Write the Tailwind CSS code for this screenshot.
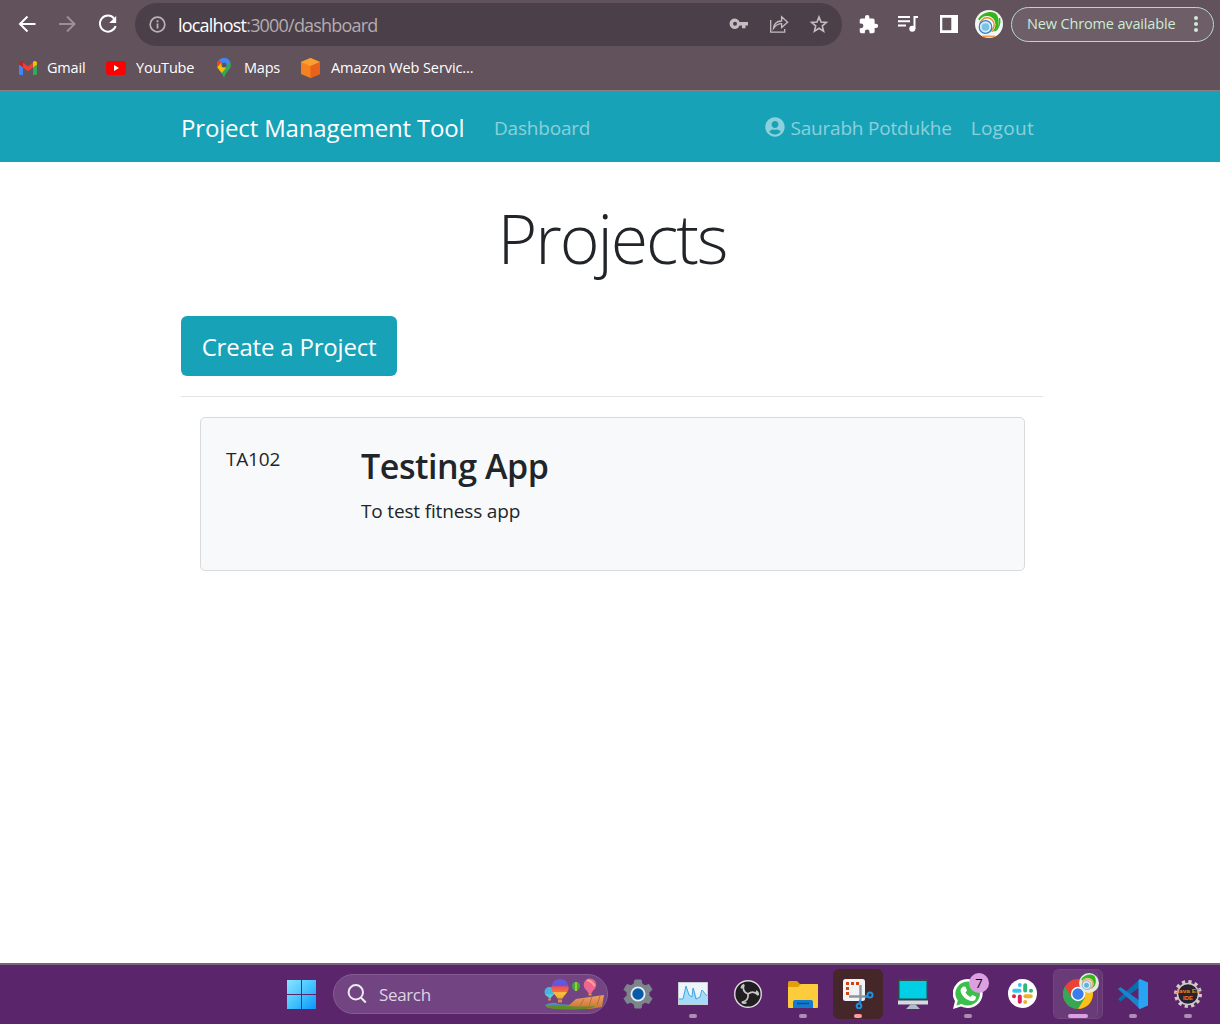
<!DOCTYPE html>
<html lang="en">
<head>
<meta charset="utf-8">
<title>Project Management Tool</title>
<script src="https://cdn.jsdelivr.net/npm/@tailwindcss/browser@4"></script>
</head>
<body class="w-[1220px] h-[1024px] overflow-hidden bg-white flex flex-col font-['Open_Sans','Noto_Sans',sans-serif] text-[#212529]">

<!-- Browser chrome -->
<header class="h-[91px] shrink-0 bg-[#61525c] border-b border-[#8a7d85] flex flex-col text-white">
  <div class="h-[48px] flex items-center">
    <svg class="ml-[17px] w-5 h-5" viewBox="0 0 20 20" fill="none" stroke="#fff" stroke-width="2"><path d="M18.500 10H3.500M10.500 2.500L3 10l7.500 7.500"/></svg>
    <svg class="ml-5 w-5 h-5" viewBox="0 0 20 20" fill="none" stroke="#9b9097" stroke-width="2"><path d="M2 10h15.500M10 2.500l7.500 7.500L10 17.500"/></svg>
    <svg class="ml-5 w-[22px] h-[22px]" viewBox="0 0 22 22" fill="none"><path d="M17.200 5.600A8 8 0 1 0 18.600 13" stroke="#fff" stroke-width="2"/><path d="M19.200 3v7h-7z" fill="#fff"/></svg>
    <div class="ml-4 w-[707px] h-[43px] rounded-full bg-[#4b4049] flex items-center">
      <svg class="ml-[14px] w-[17px] h-[17px]" viewBox="0 0 17 17" fill="none" stroke="#b9b3b7"><circle cx="8.500" cy="8.500" r="7.300" stroke-width="1.700"/><path d="M8.500 7.600v5M8.500 4.300v1.900" stroke-width="1.800"/></svg>
      <div class="ml-[12px] pt-px text-[18px] leading-6 whitespace-nowrap tracking-[-0.800px] text-[#b3acb0]"><span class="text-white">localhost</span>:3000/dashboard</div>
      <div class="ml-auto mr-[13px] flex items-center gap-5 text-[#c3bdc1]">
        <svg class="w-5 h-5" viewBox="0 0 20 20" fill="currentColor"><path fill-rule="evenodd" d="M10.600 8A5.200 5.200 0 1 0 10.600 11.500H13v2.800h3.500v-2.800H19V8zM6 7.800a2 2 0 1 1 0 4 2 2 0 0 1 0-4z"/></svg>
        <svg class="w-5 h-5" viewBox="0 0 20 20" fill="none" stroke="currentColor" stroke-width="1.300"><path d="M1.700 6v12.200h14v-3.300M4.500 14.300C5 9.500 8 7.200 12.600 7V2.800l6 5.400-6 5.400V9.700c-3.500 0-5.800 1.400-8.100 4.600z"/></svg>
        <svg class="w-5 h-5" viewBox="0 0 20 20" fill="none" stroke="currentColor" stroke-width="1.600"><path d="M10 3l2 5 5.400.4-4.100 3.500 1.300 5.300L10 14.300l-4.600 2.900 1.300-5.300-4.100-3.500L8 8z"/></svg>
      </div>
    </div>
    <svg class="ml-[16px] w-[21px] h-[21px]" viewBox="0 0 24 24" fill="#fff"><path d="M20.500 11H19V7c0-1.100-.9-2-2-2h-4V3.500a2.500 2.500 0 0 0-5 0V5H4c-1.100 0-2 .9-2 2v3.800h1.500a2.700 2.700 0 0 1 0 5.400H2V20c0 1.100.9 2 2 2h3.800v-1.500a2.700 2.700 0 0 1 5.400 0V22H17c1.100 0 2-.9 2-2v-4h1.500a2.500 2.500 0 0 0 0-5z"/></svg>
    <svg class="ml-[19px] w-[21px] h-[18px]" viewBox="0 0 21 18" fill="none" stroke="#fff" stroke-width="2"><path d="M0 2h12M0 6.200h12M0 10.400h8M16.500 14V2h3.500"/><circle cx="14.300" cy="13.700" r="2.300" fill="#fff" stroke-width="1.500"/></svg>
    <svg class="ml-[21px] w-[18px] h-[18px]" viewBox="0 0 18 18"><path fill="#fff" fill-rule="evenodd" d="M0 0h18v18H0zM2.300 2.800v12.400h9V2.800z"/></svg>
    <svg class="ml-[17px] w-7 h-7" viewBox="0 0 28 28"><circle cx="14" cy="14" r="14" fill="#f4f5f4"/><path d="M3 9C8 1 19 0 22 5c3 6 2 14-5 17z" fill="#35b51c"/><path d="M24.500 8c1 5-1 11-5 13" stroke="#35b51c" stroke-width="1.500" fill="none"/><circle cx="12" cy="14.500" r="8.500" fill="#fff"/><circle cx="12" cy="15" r="7.200" fill="none" stroke="#ef8a2b" stroke-width="1.500"/><circle cx="10.500" cy="17" r="6.300" fill="#d5ebf7" stroke="#2f83c5" stroke-width="1.200"/><circle cx="10.500" cy="17" r="3.800" fill="#7dc0e6"/><path d="M7 26.300h13" stroke="#ef9c4f" stroke-width="1.500"/></svg>
    <div class="ml-2 w-[203px] h-[35px] shrink-0 rounded-full border-[1.500px] border-[#b7d9c4] bg-[#6d5e67] flex items-center text-[#cdebd6]">
      <span class="ml-[15px] text-[14.500px] leading-5 whitespace-nowrap tracking-[-0.150px]">New Chrome available</span>
      <svg class="ml-auto mr-[15px] w-1 h-4" viewBox="0 0 4 16" fill="currentColor"><circle cx="2" cy="2" r="2"/><circle cx="2" cy="8" r="2"/><circle cx="2" cy="14" r="2"/></svg>
    </div>
  </div>
  <div class="h-[40px] flex items-center text-[14.500px] leading-5 whitespace-nowrap tracking-[-0.200px]">
    <svg class="ml-[19px] w-[18px] h-[14px]" viewBox="0 0 18 14"><path d="M0 2.500h4V14H1.200A1.200 1.200 0 0 1 0 12.800z" fill="#4285f4"/><path d="M14 2.500h4v10.300a1.200 1.200 0 0 1-1.200 1.200H14z" fill="#34a853"/><path d="M4 1.600l5 3.800 5-3.800v5L9 10.300 4 6.600z" fill="#ea4335"/><path d="M0 2.200C0 .2 2.300-.6 4 .8v5.800l-4-3z" fill="#c5221f"/><path d="M18 2.200c0-2-2.300-2.800-4-1.400v5.800l4-3z" fill="#fbbc04"/></svg>
    <span class="ml-[10px] w-[59px]">Gmail</span>
    <svg class="w-[20px] h-[14px]" viewBox="0 0 20 14"><rect width="20" height="14" rx="3" fill="#f00"/><path d="M8 4v6l5-3z" fill="#fff"/></svg>
    <span class="ml-[10px] w-[81px]">YouTube</span>
    <svg class="w-[14px] h-5" viewBox="0 0 14 20"><defs><clipPath id="pin"><path d="M7 0a7 7 0 0 0-7 7c0 4.500 4.700 5.500 7 13 2.300-7.500 7-8.500 7-13a7 7 0 0 0-7-7z"/></clipPath></defs><g clip-path="url(#pin)"><path d="M0 0h14v20H0z" fill="#34a853"/><path d="M-1 14L12 0H0z" fill="#4285f4"/><path d="M0 0l5.500 5-6 7z" fill="#ea4335"/><path d="M0 9.500l4-4.500 5 5-6 7z" fill="#fbbc04"/><path d="M4 5L8-1h6v4L9 9z" fill="#4285f4"/></g><circle cx="7" cy="7" r="2.500" fill="#61525c"/></svg>
    <span class="ml-[13px] w-[57px]">Maps</span>
    <svg class="w-[19px] h-5" viewBox="0 0 19 20"><path d="M9.500 0L19 4v12l-9.500 4L0 16V4z" fill="#f58220"/><path d="M9.500 0L19 4 9.500 8 0 4z" fill="#fba02f"/><path d="M9.500 8L19 4v12l-9.500 4z" fill="#e8621c"/></svg>
    <span class="ml-[11px] tracking-[-0.090px]">Amazon Web Servic...</span>
  </div>
</header>

<!-- Navigation bar -->
<nav class="h-[71px] shrink-0 bg-[#17a2b8] flex items-center pl-[181px] pr-[186px] whitespace-nowrap text-[19px] text-white/50">
  <a class="w-[313px] pt-[2px] text-[24px] text-white tracking-[-0.170px]">Project Management Tool</a>
  <a class="pt-1 tracking-[-0.200px]">Dashboard</a>
  <a class="ml-auto pt-[3px] flex items-center tracking-[-0.200px]"><svg class="w-5 h-5 mr-[5px] -mt-[2px]" viewBox="0 0 496 512" fill="currentColor"><path d="M248 8C111 8 0 119 0 256s111 248 248 248 248-111 248-248S385 8 248 8zm0 96c48.600 0 88 39.400 88 88s-39.400 88-88 88-88-39.400-88-88 39.400-88 88-88zm0 344c-58.700 0-111.300-26.600-146.500-68.200 18.800-35.400 55.600-59.800 98.500-59.800 2.400 0 4.800.4 7.100 1.100 13 4.200 26.600 6.900 40.900 6.900 14.300 0 28-2.700 40.900-6.900 2.300-.7 4.700-1.100 7.100-1.100 42.900 0 79.700 24.400 98.500 59.800C359.300 421.400 306.700 448 248 448z"/></svg>Saurabh Potdukhe</a>
  <a class="ml-[19px] pt-[3px] tracking-[0.300px]">Logout</a>
</nav>

<!-- Dashboard -->
<main class="flex-1 pl-[181px] pr-[177px] flex flex-col">
  <h1 class="mt-[34px] h-[84px] leading-[84px] text-center text-[68px] font-light tracking-[-2.100px]">Projects</h1>
  <a class="mt-[36px] w-[216px] h-[60px] pt-[2px] rounded-[6px] bg-[#17a2b8] text-white text-[24px] tracking-[-0.200px] flex items-center justify-center whitespace-nowrap">Create a Project</a>
  <hr class="mt-5 border-0 h-px bg-[#e3e3e4]">
  <section class="mt-5 mx-[19px] mr-[18px] h-[154px] rounded-[5px] border border-[#d8dadc] bg-[#f8f9fa] flex pl-[25px] text-[19px]">
    <div class="w-[135px] pt-[26px] leading-[30px] tracking-[-0.200px]">TA102</div>
    <div>
      <h3 class="mt-[27px] text-[34px] leading-[42px] font-semibold tracking-[-0.450px]">Testing App</h3>
      <p class="mt-[9px] leading-[30px] tracking-[-0.160px]">To test fitness app</p>
    </div>
  </section>
</main>

<!-- Taskbar -->
<footer class="h-[61px] shrink-0 bg-[#5a256a] border-t-2 border-[#77657c] flex items-center pl-[287px] pb-px">
  <svg class="w-[29px] h-[29px] mt-px" viewBox="0 0 29 29"><defs><linearGradient id="win" x1="0" y1="0" x2="1" y2="1"><stop offset="0" stop-color="#8be3ff"/><stop offset=".5" stop-color="#45c5ff"/><stop offset="1" stop-color="#0a95fb"/></linearGradient></defs><path fill="url(#win)" d="M0 0h14v14H0zM15 0h14v14H15zM0 15h14v14H0zM15 15h14v14H15z"/></svg>
  <div class="ml-[17px] w-[275px] h-[40px] rounded-full bg-[#724582] border border-[#835c91] flex items-center text-[#ded3e2]">
    <svg class="ml-[13px] w-5 h-5" viewBox="0 0 20 20" fill="none" stroke="#efe9f1" stroke-width="2"><circle cx="8.800" cy="8.300" r="7.200"/><path d="M13.800 13.500l5 5"/></svg>
    <span class="ml-[12px] pt-px text-[17px] leading-6 tracking-[-0.350px]">Search</span>
    <svg class="ml-auto mr-[3px] w-[60px] h-8" viewBox="0 0 60 32"><defs><linearGradient id="bal" x1="0" y1="0" x2="0" y2="1"><stop offset="0" stop-color="#5a5fe0"/><stop offset=".35" stop-color="#6f50d6"/><stop offset=".4" stop-color="#ef5252"/><stop offset=".65" stop-color="#f4703c"/><stop offset=".7" stop-color="#fcc33b"/><stop offset="1" stop-color="#f7a52a"/></linearGradient><linearGradient id="cliff" x1="0" y1="0" x2="0" y2="1"><stop offset="0" stop-color="#efa263"/><stop offset="1" stop-color="#c77336"/></linearGradient></defs><path d="M1 27q8-4 14-1l14 1v3H4z" fill="#5588c4"/><path d="M22 30l10-9 28-4-2 12-12 2z" fill="url(#cliff)"/><path d="M36 28l4-7M45 28l3-9M53 27l3-9" stroke="#b96d3c"/><path d="M1 28.500q12-2 22-.5 15 1 29 0-6 3.500-26 3.500Q7 32 1 28.500z" fill="#5f8f22"/><circle cx="5.500" cy="14" r="5" fill="#47b5e2"/><path d="M1 16h9l-4 5z" fill="#59c8da"/><path d="M4 20.500h3v2H4z" fill="#c28a4b"/><path d="M16 1a8.700 8.700 0 0 1 8.700 8.700c0 4.500-4.700 7.300-6.200 10.800h-5C12 17 7.300 14.200 7.300 9.700A8.700 8.700 0 0 1 16 1z" fill="url(#bal)"/><path d="M14 21.500h4v3h-4z" fill="#d29140"/><path d="M32 4a4 4 0 0 1 4 4c0 2-2 4-3 5h-2c-1-1-3-3-3-5a4 4 0 0 1 4-4z" fill="#44a83e"/><path d="M32 4v9" stroke="#b3db3c" stroke-width="1.500"/><path d="M46 .5A6.200 6.200 0 0 1 52.200 6.700c0 4-3.500 5.500-5 8.800h-2.500c-1.500-3.300-5-4.800-5-8.800A6.200 6.200 0 0 1 46 .5z" fill="#ef6591"/><path d="M43 2q5 1 7.500 6" stroke="#ffa68c" stroke-width="2" fill="none"/><path d="M44.500 15.500h3v2h-3z" fill="#e59b3c"/></svg>
  </div>
  <div class="ml-[5px] flex gap-[5px]">
    <!-- Settings -->
    <div class="w-[50px] h-[50px] flex justify-center pt-[10px]"><svg class="w-[30px] h-[30px]" viewBox="0 0 30 30"><path d="M12 1h6l1 4 3 1.700L26 5.500l3 5-3 3v3l3 3-3 5-4-1.200L19 25l-1 4h-6l-1-4-3-1.700-4 1.200-3-5 3-3v-3l-3-3 3-5 4 1.200L11 5z" fill="#7c858b" stroke="#7c858b" stroke-linejoin="round"/><circle cx="15" cy="15" r="7.500" fill="#e6edf3"/><circle cx="15" cy="15" r="5.700" fill="#075ba9"/></svg></div>
    <!-- Resource monitor -->
    <div class="w-[50px] h-[50px] relative flex justify-center pt-[13px]"><svg class="w-[30px] h-[23px]" viewBox="0 0 30 23"><rect width="30" height="23" fill="#c4cdd6"/><rect x="1" y="1" width="28" height="21" fill="#eef4f9"/><path d="M1 22v-5h4L8 4l3 9 3 2 2-9 3 11 3-2 3-6 4 6v7z" fill="#a4dbfa"/><path d="M1 17h4L8 4l3 9 3 2 1-9 3 11 4-2 2-7 5 6" fill="none" stroke="#3ca5de"/></svg><i class="absolute left-[21px] top-[45px] w-2 h-1 rounded-full bg-[#ac8eb4]"></i></div>
    <!-- OBS -->
    <div class="w-[50px] h-[50px] flex justify-center pt-[11px]"><svg class="w-7 h-7" viewBox="0 0 28 28"><circle cx="14" cy="14" r="13.300" fill="#201e20" stroke="#dcdadd" stroke-width="1.400"/><g fill="none" stroke="#c9c6ca" stroke-width="1.700"><path id="arm" d="M10 4.500c-1.500 4.500 0 8 4 9.500M7.500 8.500q-.3-2.700 2.500-4"/><use href="#arm" transform="rotate(120 14 14)"/><use href="#arm" transform="rotate(240 14 14)"/></g></svg></div>
    <!-- File Explorer -->
    <div class="w-[50px] h-[50px] relative flex justify-center pt-[12px]"><svg class="w-[30px] h-[27px]" viewBox="0 0 30 27"><path d="M0 1.500Q0 0 1.500 0H9l3 3h17q1 0 1 1v8H0z" fill="#e0a006"/><path d="M0 6h10l3-3h16q1 0 1 1v22q0 1-1 1H1q-1 0-1-1z" fill="#fdcc3d"/><path d="M5 27v-6q0-2 2-2h16q2 0 2 2v6z" fill="#137ccd"/><path d="M9 22.500h12" stroke="#0a4d91" stroke-width="1.500"/></svg><i class="absolute left-[21px] top-[45px] w-2 h-1 rounded-full bg-[#ac8eb4]"></i></div>
    <!-- Snipping Tool -->
    <div class="w-[50px] h-[50px] relative rounded-[6px] bg-[#45272a] pl-[10px] pt-[10px]"><svg class="w-[31px] h-[30px]" viewBox="0 0 31 30"><rect width="22" height="22" rx="2.500" fill="#f1f3f5"/><path d="M3 3h3v3H3zM8 3h3v3H8zM13 3h3v3h-3zM3 8h3v3H3zM3 13h3v3H3z" fill="#d1430d"/><path d="M17.500 6v15M6 17.500h17" stroke="#8c959d" stroke-width="2.400"/><path d="M22 18l3-1M17.500 21l-1 3" stroke="#1a91e2" stroke-width="2.500"/><g fill="none" stroke="#1a91e2" stroke-width="2"><circle cx="27" cy="16" r="2.500"/><circle cx="16" cy="27" r="2.300"/></g></svg><i class="absolute left-[21px] top-[45px] w-2 h-1 rounded-full bg-[#ff99a4]"></i></div>
    <!-- This PC -->
    <div class="w-[50px] h-[50px] flex justify-center pt-[10px]"><svg class="w-[30px] h-[30px]" viewBox="0 0 30 30"><path d="M0 0h30v22H0z" fill="#37474f"/><path d="M1.500 2h27v17.500h-27z" fill="#00cfe5"/><path d="M0 21.500h30v4H0z" fill="#d2dbdf"/><path d="M12.500 25.500h5L22 30H8z" fill="#aebcc3"/></svg></div>
    <!-- WhatsApp -->
    <div class="w-[50px] h-[50px] relative flex justify-center pt-[10px]"><svg class="w-[30px] h-[30px]" viewBox="0 0 30 30"><path d="M15 0a15 14.500 0 1 1-7 27.500L0 30l2-8A15 14.500 0 0 1 15 0z" fill="#fff"/><path d="M15 2.500a12.500 12 0 1 1-6.500 22.500l-5 1.500 1.300-5A12.500 12 0 0 1 15 2.500z" fill="#3cc04b"/><path d="M10.500 7.500l2 .2 1.500 3.800-1.500 2q1.500 3 4.800 4.500l2-2 3.700 1.800q0 4.200-4 4.200c-5 0-11-5.500-11.500-10.500q0-2.500 3-4z" fill="#fff"/></svg><span class="absolute left-[26px] top-[4px] w-5 h-5 rounded-full bg-[#dca0e2] text-black text-[13px] leading-5 text-center">7</span><i class="absolute left-[21px] top-[45px] w-2 h-1 rounded-full bg-[#ac8eb4]"></i></div>
    <!-- Slack -->
    <div class="w-[50px] h-[50px] pl-[10px] pt-[10px]"><svg class="w-[29px] h-[29px]" viewBox="0 0 29 29"><circle cx="14.500" cy="14.500" r="14.500" fill="#fff"/><g fill="none" stroke-width="4" stroke-linecap="round"><path d="M11.800 6v.01M6.200 11.800h5.400" stroke="#36c5f0"/><path d="M17.200 6.200v5.400M23 11.800h.01" stroke="#2eb67d"/><path d="M17.400 17.200h5.400M17.200 23v.01" stroke="#ecb22e"/><path d="M11.800 17.400v5.400M6 17.200h.01" stroke="#e01e5a"/></g></svg></div>
    <!-- Chrome -->
    <div class="w-[50px] h-[50px] relative rounded-[6px] bg-[#663675] border border-[#71467f]"><div class="w-[44px] h-[48px] rounded-r-[6px] border-r border-[#764c84] bg-[#6a3b79]"></div>
      <svg class="absolute left-[9px] top-[9px] w-[30px] h-[30px]" viewBox="0 0 30 30"><circle cx="15" cy="15" r="15" fill="#ea4335"/><path d="M2 7.500A15 15 0 0 0 15 30l7-11-13 0z" fill="#34a853"/><path d="M15 30A15 15 0 0 0 28.500 8.500H15l7 10z" fill="#fbc116"/><circle cx="15" cy="15" r="7.200" fill="#fff"/><circle cx="15" cy="15" r="5.700" fill="#3b7ded"/></svg>
      <svg class="absolute left-[25px] top-[3px] w-5 h-5" viewBox="0 0 28 28"><circle cx="14" cy="14" r="14" fill="#e4ebe2"/><path d="M3 9C8 1 19 0 22 5c3 6 2 14-5 17z" fill="#35b51c"/><circle cx="12" cy="15" r="8.500" fill="#f3d9b6"/><circle cx="12" cy="15.500" r="7.300" fill="none" stroke="#e8a868" stroke-width="1.500"/><circle cx="10.500" cy="17" r="6" fill="#d8eef8" stroke="#77aed4"/><circle cx="10.500" cy="17" r="3.500" fill="#64b1df"/></svg>
      <i class="absolute left-[14px] top-[44px] w-5 h-1 rounded-full bg-[#dca0e2]"></i></div>
    <!-- VS Code -->
    <div class="w-[50px] h-[50px] relative flex justify-center pt-[10px]"><svg class="w-[30px] h-[30px]" viewBox="0 0 30 30"><path d="M0 20l2.500 2.500L22 8V0z" fill="#0c6cac"/><path d="M0 10l2.500-2L22 22v8z" fill="#1a84cc"/><path d="M22 0l8 3.500v23L22 30l-1.500-1V1z" fill="#29a4f3"/></svg><i class="absolute left-[21px] top-[45px] w-2 h-1 rounded-full bg-[#ac8eb4]"></i></div>
    <!-- Eclipse Java EE -->
    <div class="w-[50px] h-[50px] relative flex justify-center pt-[11px]"><svg class="w-7 h-7 overflow-visible font-['Liberation_Sans',sans-serif]" viewBox="0 0 28 28"><circle cx="14" cy="14" r="12.300" fill="none" stroke="#cfcbc7" stroke-width="3.400" stroke-dasharray="3.220 3.220"/><circle cx="14" cy="14" r="10.500" fill="#262230" stroke="#cfcbc7" stroke-width="1.500"/><text x="14" y="12.600" text-anchor="middle" font-size="6" font-weight="700" textLength="25" lengthAdjust="spacingAndGlyphs" fill="#f0851f">Java EE</text><text x="14" y="20" text-anchor="middle" font-size="6" font-weight="700" textLength="10" lengthAdjust="spacingAndGlyphs" fill="#f0851f">IDE</text></svg><i class="absolute left-[21px] top-[45px] w-2 h-1 rounded-full bg-[#ac8eb4]"></i></div>
  </div>
</footer>
</body>
</html>
